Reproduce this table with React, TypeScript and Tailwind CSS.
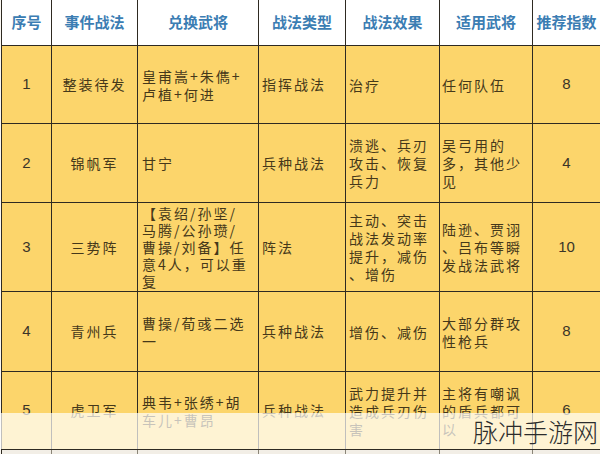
const rows = [
  {
    no: "1",
    name: "整装待发",
    heroes: ["皇甫嵩+朱儁+", "卢植+何进"],
    type: "指挥战法",
    effect: ["治疗"],
    fit: ["任何队伍"],
    score: "8",
    h: "h-[78px]",
  },
  {
    no: "2",
    name: "锦帆军",
    heroes: ["甘宁"],
    type: "兵种战法",
    effect: ["溃逃、兵刃", "攻击、恢复", "兵力"],
    fit: ["吴弓用的", "多，其他少", "见"],
    score: "4",
    h: "h-[79px]",
  },
  {
    no: "3",
    name: "三势阵",
    heroes: ["【袁绍/孙坚/", "马腾/公孙瓒/", "曹操/刘备】任", "意4人，可以重", "复"],
    type: "阵法",
    effect: ["主动、突击", "战法发动率", "提升，减伤", "、增伤"],
    fit: ["陆逊、贾诩", "、吕布等瞬", "发战法武将"],
    score: "10",
    h: "h-[89px]",
  },
  {
    no: "4",
    name: "青州兵",
    heroes: ["曹操/荀彧二选", "一"],
    type: "兵种战法",
    effect: ["增伤、减伤"],
    fit: ["大部分群攻", "性枪兵"],
    score: "8",
    h: "h-[80px]",
  },
  {
    no: "5",
    name: "虎卫军",
    heroes: ["典韦+张绣+胡", "车儿+曹昂"],
    type: "兵种战法",
    effect: ["武力提升并", "造成兵刃伤", "害"],
    fit: ["主将有嘲讽", "的盾兵都可", "以"],
    score: "6",
    h: "h-[78px]",
  },
];

const headers = ["序号", "事件战法", "兑换武将", "战法类型", "战法效果", "适用武将", "推荐指数"];
const cols = "grid grid-cols-[50px_86px_121px_87px_94px_93px_67px]";

function Lines({ lines }: { lines: string[] }) {
  const lead = lines.length > 4 ? "leading-[17px]" : "leading-[18px]";
  return (
    <div className={lead}>
      {lines.map((l, i) => (
        <div key={i} className="whitespace-nowrap">
          {l}
        </div>
      ))}
    </div>
  );
}

export default function App() {
  const cell = "border-r border-b border-[#2e2a22] flex items-center";
  const body = "tracking-[2px] text-[14px] text-[#45381a]";
  const num = "justify-center font-['Liberation_Sans',sans-serif] text-[15px] font-medium text-[#3a3428]";
  return (
    <div className="relative w-[600px] h-[454px] overflow-hidden bg-[#fbf8f2] font-['Noto_Sans_CJK_SC',sans-serif]">
      <div className="ml-[1px] border-l border-[#2e2a22]">
        <div className={`${cols} h-[46px] bg-white`}>
          {headers.map((t, i) => (
            <div
              key={t}
              className={`${cell} justify-center text-[15px] font-bold text-[#3b7db3] ${i === 6 ? "border-r-0" : ""}`}
            >
              {t}
            </div>
          ))}
        </div>
        {rows.map((r) => (
          <div key={r.no} className={`${cols} ${r.h} bg-[#fcd56b]`}>
            <div className={`${cell} ${num}`}>{r.no}</div>
            <div className={`${cell} ${body} justify-center`}>{r.name}</div>
            <div className={`${cell} ${body} pl-[4px]`}>
              <Lines lines={r.heroes} />
            </div>
            <div className={`${cell} ${body} pl-[3px]`}>{r.type}</div>
            <div className={`${cell} ${body} pl-[3px]`}>
              <Lines lines={r.effect} />
            </div>
            <div className={`${cell} ${body} pl-[2px]`}>
              <Lines lines={r.fit} />
            </div>
            <div className={`${cell} ${num} border-r-0`}>{r.score}</div>
          </div>
        ))}
        <div className={`${cols} h-[10px] bg-[#f2eee6]`}>
          {headers.map((t, i) => (
            <div key={t} className={`border-[#8a8578] ${i === 6 ? "" : "border-r"}`} />
          ))}
        </div>
      </div>

      {/* watermark band */}
      <div className="absolute left-0 right-0 top-[413px] h-[36px] bg-white/70" />
      <div className="absolute right-[2px] top-[413px] h-[36px] flex items-center text-[25px] font-light leading-none text-[#2b2b2b]">
        脉冲手游网
      </div>
    </div>
  );
}
